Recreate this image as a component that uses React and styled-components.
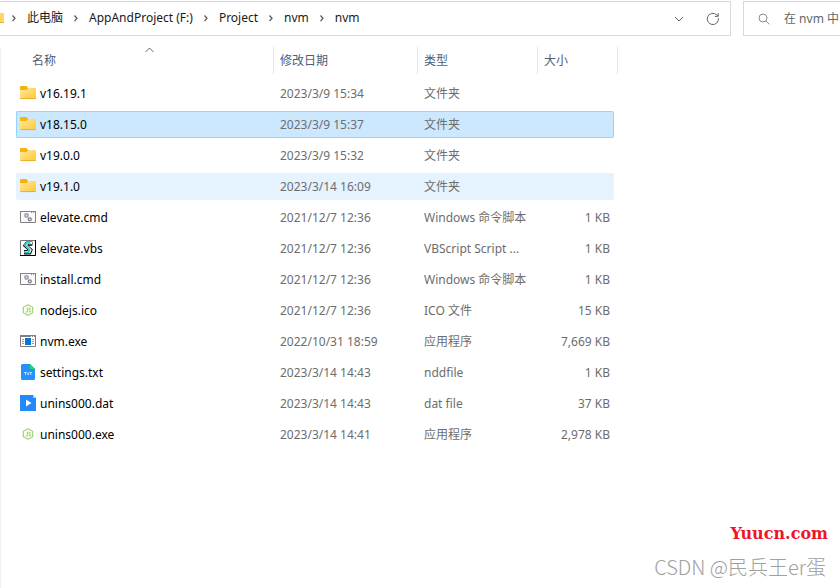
import styled, { createGlobalStyle } from "styled-components";

const GlobalStyle = createGlobalStyle`
  * {
    box-sizing: border-box;
  }

  body {
    margin: 0;
    background: #fff;
    color: #000;
    font: 12px/16px "Noto Sans", "Noto Sans CJK SC", sans-serif;
  }
`;

const Page = styled.div`
  display: flex;
  flex-direction: column;
  min-height: 100vh;
  padding-top: 1px;
  overflow: hidden;
`;

const TopBar = styled.header`
  display: flex;
  gap: 12px;
`;

const AddressBar = styled.div`
  display: flex;
  flex: 1;
  align-items: center;
  height: 35px;
  padding-right: 7px;
  border: 1px solid #d9d9d9;
  border-left: 0;
`;

const Crumbs = styled.nav`
  display: flex;
  flex: 1;
  align-items: center;
  gap: 9px;
  padding-bottom: 1px;
  color: #5c5c5c;
`;

const FolderEdge = styled.svg`
  margin-right: -3px;
`;

const Crumb = styled.a`
  color: #191919;
  text-decoration: none;
  white-space: nowrap;
`;

const IconButton = styled.button`
  display: flex;
  align-items: center;
  justify-content: center;
  width: ${(props) => props.$width}px;
  height: 24px;
  padding: 0;
  border: 0;
  background: none;
  color: #666;
`;

const SearchBox = styled.label`
  display: flex;
  flex: 0 0 97px;
  align-items: center;
  gap: 14px;
  min-width: 0;
  height: 35px;
  padding-left: 14px;
  border: 1px solid #d9d9d9;
  border-right: 0;
  color: #858c95;

  svg {
    flex: none;
  }
`;

const SearchInput = styled.input`
  flex: 1;
  min-width: 0;
  padding: 0;
  border: 0;
  outline: 0;
  background: none;
  font: inherit;

  &::placeholder {
    color: #666;
    opacity: 1;
  }
`;

const Main = styled.main`
  display: flex;
  flex: 1;
  flex-direction: column;
  margin-top: 11px;
  padding-left: 15px;
  border-left: 1px solid #f2f2f2;
`;

const FileTable = styled.table`
  width: 100%;
  max-width: 598px;
  margin-top: -4px;
  table-layout: fixed;
  border-collapse: separate;
  border-spacing: 0 4px;
`;

const HeadCell = styled.th`
  width: ${(props) => props.$width};
  height: 29px;
  padding: 0;
  vertical-align: top;
  text-align: left;
  font-weight: 400;
`;

const HeadLabel = styled.div`
  position: relative;
  height: 27px;
  padding-left: 6px;
  border-right: 1px solid #e5e5e5;
  color: #4c607a;
  line-height: 27px;

  ${HeadCell}:first-child & {
    margin-left: 8px;
    padding-left: 8px;
  }

  ${HeadCell}:last-child & {
    margin-right: -4px;
  }
`;

const SortMark = styled.svg`
  position: absolute;
  top: 0;
  left: calc(50% - 4px);
`;

const rowColors = {
  selected: { fill: "#cce8ff", line: "#99d1ff" },
  hover: { fill: "#e5f3ff", line: "#e5f3ff" },
  none: { fill: "transparent", line: "transparent" },
};

const Cell = styled.td`
  height: 27px;
  padding: 0 4px 0 6px;
  color: #6d6d6d;
  text-align: ${(props) => props.$align || "left"};
  white-space: nowrap;
`;

const NameCell = styled(Cell)`
  padding: 0 0 1px 3px;
  color: #000;
`;

const Row = styled.tr`
  ${Cell} {
    border: 1px solid ${(props) => rowColors[props.$state].line};
    border-width: 1px 0;
    background: ${(props) => rowColors[props.$state].fill};
  }

  ${Cell}:first-child {
    border-left-width: 1px;
    border-radius: 2px 0 0 2px;
  }

  ${Cell}:last-child {
    border-right-width: 1px;
    padding-right: 3px;
    border-radius: 0 2px 2px 0;
  }
`;

const FileName = styled.div`
  display: flex;
  align-items: flex-start;
  gap: 4px;
  height: 16px;
  line-height: 18px;
`;

const Marks = styled.footer`
  display: flex;
  flex-direction: column;
  align-items: flex-end;
  margin-top: auto;
  padding: 0 14px 7px 0;
`;

const SiteMark = styled.div`
  margin-right: -2px;
  color: #f01428;
  font: bold 16px/24px "DejaVu Serif", serif;
`;

const AuthorMark = styled.div`
  margin-top: 7px;
  color: #a0a0a0;
  font: 300 20px/28px "Noto Sans CJK SC", sans-serif;
`;

const CrumbArrow = () => (
  <svg width="8" height="10" viewBox="0 0 8 10" fill="none" stroke="currentColor" strokeWidth="1.3">
    <path d="M2.5 2.5 5 5.3 2.5 8.1" />
  </svg>
);

const FolderIcon = () => (
  <svg width="16" height="16" viewBox="0 0 16 16">
    <defs>
      <linearGradient id="folder" x1="0" y1="0" x2="1" y2="1">
        <stop offset="0" stopColor="#ffe79c" />
        <stop offset="1" stopColor="#ffc937" />
      </linearGradient>
    </defs>
    <path d="M0 2Q0 1 1 1H6Q6.6 1 7 1.5L8 3H15Q16 3 16 4V7H0Z" fill="#f5b30f" />
    <path d="M0 5H6.6L8.2 3H15.2Q16 3 16 3.8V13.2Q16 14 15.2 14H.8Q0 14 0 13.2Z" fill="url(#folder)" />
    <path d="M.5 13.6H15.5" stroke="#e6a31c" strokeWidth=".8" />
  </svg>
);

const ScriptIcon = () => (
  <svg width="16" height="16" viewBox="0 0 16 16">
    <path d="M.5 2.5H15.5V13.5H.5Z" fill="#fafafa" stroke="#808080" />
    <path d="M0 2H16V3H0Z" fill="#858585" />
    <path d="M11 3.5h1M13 3.5h1" stroke="#999" />
    <circle cx="6.5" cy="6.5" r="1.7" fill="#d7dbe0" stroke="#9aa2ad" strokeWidth="1.5" />
    <circle cx="9.8" cy="10.3" r="1.5" fill="#f3f3f3" stroke="#747e8b" strokeWidth="1.3" />
  </svg>
);

const VbsIcon = () => (
  <svg width="16" height="16" viewBox="0 0 16 16" fill="none">
    <path d="M.5.5H15.5V15.5H.5Z" fill="#fff" stroke="#777" />
    <path d="M0 15.5H15.5V0" stroke="#000" />
    <path d="M12.5 3.5H7L5.5 5.5 10.5 10 9.5 12.5H4" stroke="#111" strokeWidth="4" />
    <path d="M12 3.2H7L5.5 5.2 10.3 10 9.3 12H4.5" stroke="#fff" strokeWidth="2.4" />
    <path d="M10.5 3H6.5L5 5.2 9.5 9.7 8.5 12.2H5" stroke="#18c5cc" strokeWidth="1.6" />
    <path d="M8 5H12M4 10.5H7.5" stroke="#111" />
  </svg>
);

const NodeIcon = () => (
  <svg width="16" height="16" viewBox="0 0 16 16" fill="none" stroke="#a8d67a">
    <path d="M8 2.7 12.7 5.3V10.7L8 13.3 3.3 10.7V5.3Z" strokeWidth="1.3" />
    <path d="M7.4 5.4V9.4Q7.4 10.5 5.7 10M10.9 6.6Q8.8 5.7 8.8 7 8.8 7.8 10 8 11 8.3 10.8 9.2 10.3 10.3 8.5 9.6" strokeWidth="1.1" />
  </svg>
);

const ExeIcon = () => (
  <svg width="16" height="16" viewBox="0 0 16 16">
    <path d="M.5 2.5H15.5V13.5H.5Z" fill="#fff" stroke="#7b7b7b" />
    <path d="M0 2H16V4H0Z" fill="#808080" />
    <path d="M11 3.5h1M13 3.5h1" stroke="#fff" />
    <path d="M5 5H11V12H5Z" fill="#0875cf" />
    <path d="M2 6.5H4M2 8.5H4M2 10.5H4M12 6.5H14M12 8.5H14M12 10.5H14" stroke="#999" />
  </svg>
);

const TxtIcon = () => (
  <svg width="16" height="16" viewBox="0 0 16 16">
    <path d="M2.5 0H10L15 5V14.5Q15 16 13.5 16H2.5Q1 16 1 14.5V1.5Q1 0 2.5 0Z" fill="#2492fb" />
    <path d="M10 0 15 5H11.5Q10 5 10 3.5Z" fill="#22df50" />
    <path d="M4 8.5H7M5.5 8.5V11M7.5 8.5 9 11M9 8.5 7.5 11M9.5 8.5H12M10.8 8.5V11" stroke="#d8edff" strokeWidth=".8" />
  </svg>
);

const DatIcon = () => (
  <svg width="16" height="16" viewBox="0 0 16 16">
    <path d="M0 0H13L16 3V16H0Z" fill="#2389fb" />
    <path d="M13 0 16 3H13Z" fill="#a8d2ff" />
    <path d="M6 4.5 11.5 8 6 11.5Z" fill="#fff" />
  </svg>
);

const files = [
  { icon: FolderIcon, name: "v16.19.1", date: "2023/3/9 15:34", type: "文件夹" },
  { icon: FolderIcon, name: "v18.15.0", date: "2023/3/9 15:37", type: "文件夹", state: "selected" },
  { icon: FolderIcon, name: "v19.0.0", date: "2023/3/9 15:32", type: "文件夹" },
  { icon: FolderIcon, name: "v19.1.0", date: "2023/3/14 16:09", type: "文件夹", state: "hover" },
  { icon: ScriptIcon, name: "elevate.cmd", date: "2021/12/7 12:36", type: "Windows 命令脚本", size: "1 KB" },
  { icon: VbsIcon, name: "elevate.vbs", date: "2021/12/7 12:36", type: "VBScript Script ...", size: "1 KB" },
  { icon: ScriptIcon, name: "install.cmd", date: "2021/12/7 12:36", type: "Windows 命令脚本", size: "1 KB" },
  { icon: NodeIcon, name: "nodejs.ico", date: "2021/12/7 12:36", type: "ICO 文件", size: "15 KB" },
  { icon: ExeIcon, name: "nvm.exe", date: "2022/10/31 18:59", type: "应用程序", size: "7,669 KB" },
  { icon: TxtIcon, name: "settings.txt", date: "2023/3/14 14:43", type: "nddfile", size: "1 KB" },
  { icon: DatIcon, name: "unins000.dat", date: "2023/3/14 14:43", type: "dat file", size: "37 KB" },
  { icon: NodeIcon, name: "unins000.exe", date: "2023/3/14 14:41", type: "应用程序", size: "2,978 KB" },
];

const Address = () => (
  <AddressBar>
    <Crumbs>
      {/* only the right edge of the folder shows */}
      <FolderEdge width="4" height="12" viewBox="0 0 4 12">
        <path d="M0 1H3Q4 1 4 2V10Q4 11 3 11H0Z" fill="#ffd567" />
        <path d="M0 10.5H3.5" stroke="#e8ad31" />
      </FolderEdge>
      <CrumbArrow />
      <Crumb href="#pc">此电脑</Crumb>
      <CrumbArrow />
      <Crumb href="#drive">AppAndProject (F:)</Crumb>
      <CrumbArrow />
      <Crumb href="#project">Project</Crumb>
      <CrumbArrow />
      <Crumb href="#nvm">nvm</Crumb>
      <CrumbArrow />
      <Crumb href="#nvm-nvm">nvm</Crumb>
    </Crumbs>
    <IconButton $width={48}>
      <svg width="10" height="10" viewBox="0 0 10 10" fill="none" stroke="currentColor">
        <path d="M1 3 5 7 9 3" />
      </svg>
    </IconButton>
    <IconButton $width={20}>
      <svg width="14" height="14" viewBox="0 0 14 14" fill="none" stroke="currentColor">
        <path d="M12.4 6.2A5.6 5.6 0 1 1 10.6 2.8L12 4M12.2 1V4.4H8.8" />
      </svg>
    </IconButton>
  </AddressBar>
);

export default function App() {
  return (
    <Page>
      <GlobalStyle />
      <TopBar>
        <Address />
        <SearchBox htmlFor="search">
          <svg width="12" height="12" viewBox="0 0 12 12" fill="none" stroke="currentColor">
            <circle cx="5" cy="5" r="4" />
            <path d="M8 8 11.4 11.4" />
          </svg>
          <SearchInput id="search" placeholder="在 nvm 中" />
        </SearchBox>
      </TopBar>
      <Main>
        <FileTable>
          <thead>
            <tr>
              <HeadCell $width="258px">
                <HeadLabel>
                  名称
                  <SortMark width="9" height="6" viewBox="0 0 9 6" fill="none" stroke="#666">
                    <path d="M.5 5 4.5 1 8.5 5" />
                  </SortMark>
                </HeadLabel>
              </HeadCell>
              <HeadCell $width="144px">
                <HeadLabel>修改日期</HeadLabel>
              </HeadCell>
              <HeadCell $width="120px">
                <HeadLabel>类型</HeadLabel>
              </HeadCell>
              <HeadCell>
                <HeadLabel>大小</HeadLabel>
              </HeadCell>
            </tr>
          </thead>
          <tbody>
            {files.map(({ icon: Icon, name, date, type, size, state = "none" }) => (
              <Row key={name} $state={state}>
                <NameCell>
                  <FileName>
                    <Icon />
                    {name}
                  </FileName>
                </NameCell>
                <Cell>{date}</Cell>
                <Cell>{type}</Cell>
                <Cell $align="right">{size}</Cell>
              </Row>
            ))}
          </tbody>
        </FileTable>
        <Marks>
          <SiteMark>Yuucn.com</SiteMark>
          <AuthorMark>CSDN @民兵王er蛋</AuthorMark>
        </Marks>
      </Main>
    </Page>
  );
}
